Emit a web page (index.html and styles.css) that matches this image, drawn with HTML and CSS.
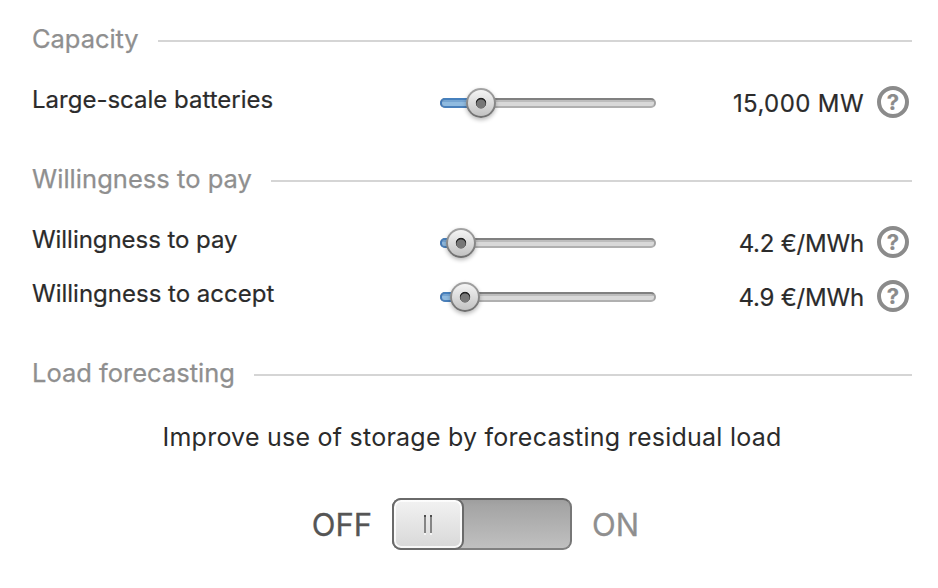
FILE: index.html
```html
<!DOCTYPE html>
<html lang="en">
<head>
<meta charset="utf-8">
<title>Storage settings</title>
<link rel="stylesheet" href="styles.css">
</head>
<body>
<main class="panel">
  <section class="group">
    <h2 class="heading"><span class="heading-text heading-tight">Capacity</span></h2>
    <div class="row">
      <span class="label">Large-scale batteries</span>
      <div class="slider"><div class="fill" style="width:41px"></div><div class="knob" style="left:26px"></div></div>
      <span class="value value-power">15,000 MW</span>
      <span class="help">?</span>
    </div>
  </section>
  <section class="group">
    <h2 class="heading"><span class="heading-text heading-wide">Willingness to pay</span></h2>
    <div class="row">
      <span class="label label-tight">Willingness to pay</span>
      <div class="slider"><div class="fill" style="width:21px"></div><div class="knob" style="left:6px"></div></div>
      <span class="value">4.2 €/MWh</span>
      <span class="help">?</span>
    </div>
    <div class="row">
      <span class="label">Willingness to accept</span>
      <div class="slider"><div class="fill" style="width:25px"></div><div class="knob" style="left:10px"></div></div>
      <span class="value">4.9 €/MWh</span>
      <span class="help">?</span>
    </div>
  </section>
  <section class="group">
    <h2 class="heading"><span class="heading-text">Load forecasting</span></h2>
    <p class="description">Improve use of storage by forecasting residual load</p>
    <div class="toggle">
      <span class="off">OFF</span>
      <div class="switch"><div class="handle"><i class="grip"></i><i class="grip"></i></div></div>
      <span class="on">ON</span>
    </div>
  </section>
</main>
</body>
</html>
```
FILE: styles.css
```css
* { box-sizing: border-box; }
body {
  margin: 0;
  background: #fff;
  color: #2b2b2b;
  font-family: Inter, "Liberation Sans", sans-serif;
}
.panel {
  width: 938px;
  height: 588px;
  padding: 14px 26px 0 32px;
  display: flex;
  flex-direction: column;
  gap: 24px;
  overflow: hidden;
}
.heading {
  margin: 0 0 8px;
  height: 54px;
  display: flex;
  align-items: center;
  font-size: 25.5px;
  font-weight: 400;
  line-height: 30px;
  color: #8f8f8f;
  -webkit-text-stroke: .25px #8f8f8f;
}
.heading::after {
  content: "";
  flex: 1;
  height: 2px;
  background: #d5d5d5;
}
.heading-text { white-space: nowrap; margin-right: 19.5px; padding-bottom: 4px; }
.heading-tight { letter-spacing: -.06px; }
.heading-wide { letter-spacing: .04px; }
.row {
  height: 54px;
  display: grid;
  grid-template-columns: 408px 216px 221px 32px;
  align-items: center;
  font-size: 24px;
  line-height: 30px;
  white-space: nowrap;
  -webkit-text-stroke: .2px;
}
.label { padding-bottom: 6px; }
.label-tight { letter-spacing: -.05px; }
.value { text-align: right; padding: 2px 13px 0 0; letter-spacing: -.2px; }
.value-power { letter-spacing: .4px; }
.slider {
  position: relative;
  height: 10px;
  border-radius: 5px;
  border: 2px solid;
  border-color: #808080 #a2a2a2 #b0b0b0 #929292;
  background: linear-gradient(#bdbdbd 0 2px, #d9d9d9 2px);
}
.fill {
  height: 10px;
  margin: -2px;
  border: 2px solid;
  border-color: #4680bd #4680bd #4a80bb #4078b8;
  border-radius: 5px 0 0 5px;
  background: linear-gradient(#76a5d2 0 2px, #90bbe0 2px) padding-box;
}
.knob {
  position: absolute;
  top: -12px;
  margin-left: -2px;
  width: 30px;
  height: 30px;
  border-radius: 50%;
  background:
    radial-gradient(circle at 50% 54%, #777 0 4.2px, transparent 5px),
    radial-gradient(circle at 50% 50%, #222 0 4.8px, transparent 5.6px),
    linear-gradient(#f4f4f4, #c2c2c2) padding-box,
    linear-gradient(#a4a4a4, #6e6e6e) border-box;
  border: 2px solid transparent;
  box-shadow: 0 2px 4px rgba(0, 0, 0, .28);
}
.help {
  width: 32px;
  height: 32px;
  margin-top: -2px;
  border: 4px solid #8b8b8b;
  border-radius: 50%;
  color: #8b8b8b;
  font-size: 22px;
  font-weight: 700;
  line-height: 24px;
  text-align: center;
}
.description {
  margin: 20px 0 0;
  text-align: center;
  font-size: 25px;
  line-height: 30px;
  letter-spacing: .24px;
  white-space: nowrap;
}
.toggle {
  margin-top: 46px;
  display: grid;
  grid-template-columns: 340px 180px 1fr;
  column-gap: 20px;
  align-items: center;
  font-size: 31px;
  line-height: 52px;
}
.off { text-align: right; color: #555; -webkit-text-stroke: .3px #555; }
.on { color: #8f8f8f; -webkit-text-stroke: .3px #8f8f8f; }
.off, .on { padding-top: 1px; height: 52px; }
.switch {
  height: 52px;
  border: 2px solid;
  border-color: #666 #777 #808080 #666;
  border-radius: 9px;
  background: linear-gradient(#9e9e9e, #a5a5a5 6px, #c0c0c0);
}
.handle {
  width: 72px;
  height: 52px;
  margin: -2px;
  border: 2px solid #6a6a6a;
  border-radius: 9px;
  background: linear-gradient(#f2f2f2, #d8d8d8);
  box-shadow: inset 0 0 0 2px rgba(255, 255, 255, .8);
  display: flex;
  justify-content: center;
  align-items: center;
  gap: 4px;
}
.grip {
  width: 2px;
  height: 18px;
  background: linear-gradient(#4d4d4d 2px, #858585 2px);
  box-shadow: 0 2px #f4f4f4;
}
```
